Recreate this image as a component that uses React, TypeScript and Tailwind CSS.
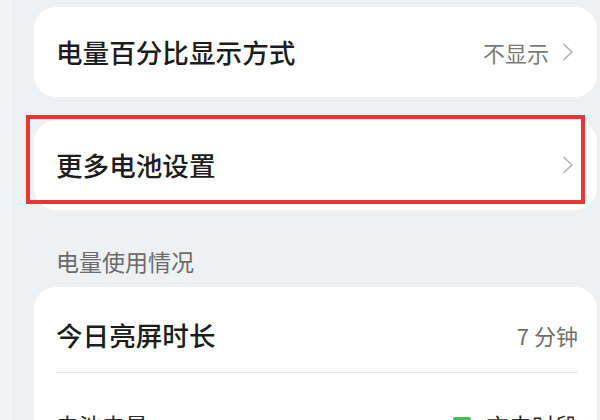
import React from "react";

const font = { fontFamily: '"Noto Sans CJK SC", "Noto Sans", sans-serif' };

function Chevron() {
  return (
    <svg width="12" height="18" viewBox="0 0 12 18" fill="none">
      <path d="M2 1.5 L10 9 L2 16.5" stroke="#b4b4b4" strokeWidth="1.7" strokeLinecap="round" strokeLinejoin="round" />
    </svg>
  );
}

export default function App() {
  return (
    <div className="relative w-[600px] h-[420px] overflow-hidden bg-[#eff0f2]" style={font}>
      <div className="absolute left-0 top-0 w-[14px] h-full bg-[#f2f3f4] border-r border-[#e9eaec]" />
      <div className="flex flex-col pl-[34px] pt-[7px] w-[597px]">
        {/* Card 1 */}
        <div className="h-[90px] bg-white rounded-[22px] flex items-center pl-[22px] pr-[23px]">
          <span className="text-[26.6px] leading-[26px] font-medium text-[#1c1c1c]">电量百分比显示方式</span>
          <span className="ml-auto text-[22px] leading-[22px] text-[#7a7a7a]">不显示</span>
          <span className="ml-[13px] flex"><Chevron /></span>
        </div>
        {/* Card 2 */}
        <div className="relative mt-[23px]">
          <div className="h-[90px] bg-white rounded-[22px] flex items-center pl-[22px] pr-[23px]">
            <span className="text-[26.6px] leading-[26px] font-medium text-[#1c1c1c]">更多电池设置</span>
            <span className="ml-auto flex"><Chevron /></span>
          </div>
          <div className="absolute left-[-8px] top-[-5px] w-[559px] h-[89px] border-[4px] border-[#ec3338]" />
        </div>
        {/* Section header */}
        <div className="mt-[40px] pl-[22px] text-[23px] leading-[23px] text-[#6b6b6b]">电量使用情况</div>
        {/* Card 3 */}
        <div className="mt-[14px] bg-white rounded-[22px] pt-[35px] px-[22px] h-[200px]">
          <div className="flex items-center h-[26px]">
            <span className="text-[26.6px] leading-[26px] font-medium text-[#1c1c1c]">今日亮屏时长</span>
            <span className="ml-auto mr-[-3px] text-[22px] leading-[22px] text-[#6f6f6f]">7 分钟</span>
          </div>
          <div className="mt-[24px] h-px bg-[#e6e6e8] mr-[-3px]" />
          <div className="flex items-center mt-[41px] mr-[-3px]">
            <span className="text-[23px] leading-[23px] text-[#2a2a2a]">电池电量</span>
            <span className="ml-auto w-[18px] h-[18px] bg-[#3ec34b] rounded-[2px]" />
            <span className="ml-[15px] text-[23px] leading-[23px] text-[#2a2a2a]">充电时段</span>
          </div>
        </div>
      </div>
    </div>
  );
}
